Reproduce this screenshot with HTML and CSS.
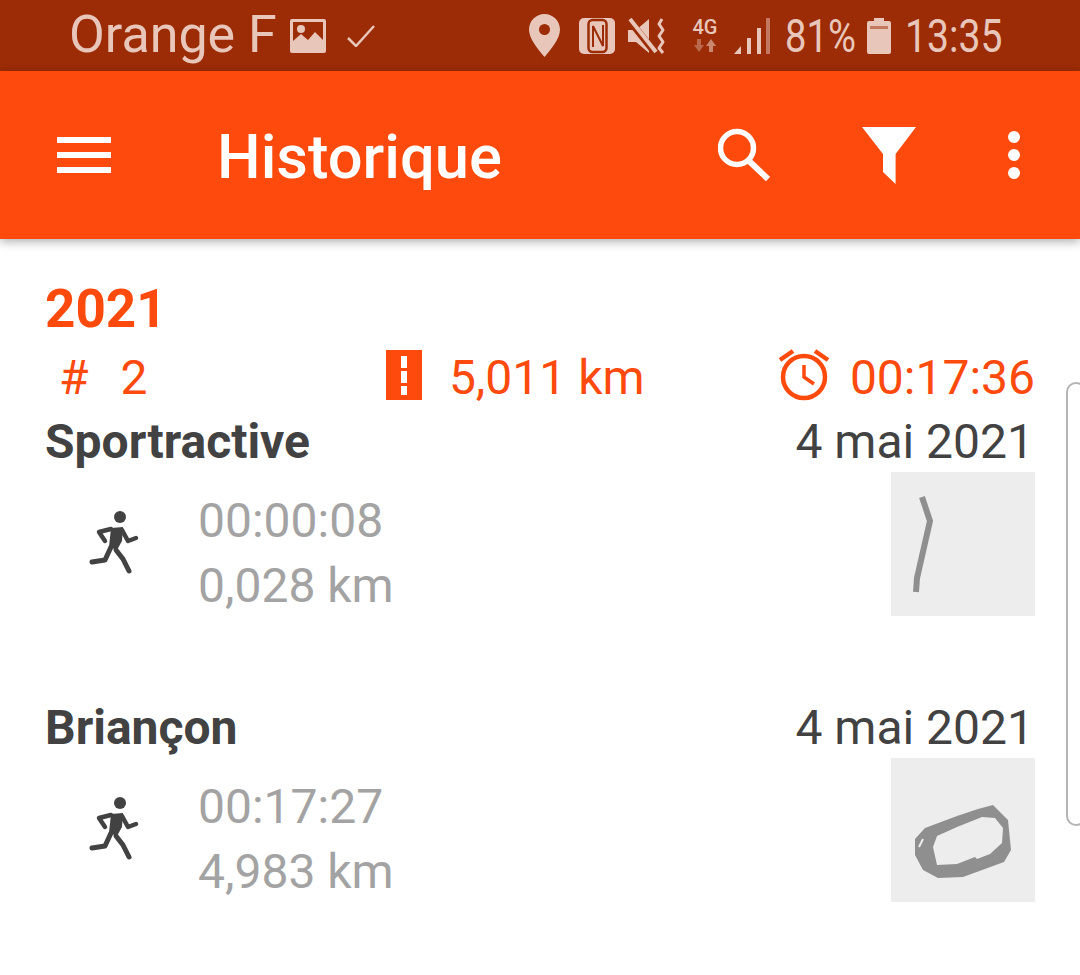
FILE: index.html
```html
<!DOCTYPE html>
<html lang="fr">
<head>
<meta charset="UTF-8" />
<meta name="viewport" content="width=device-width, initial-scale=1" />
<title>Historique</title>
<link rel="stylesheet" href="styles.css">
</head>
<body>

<!-- Status bar -->
<div class="status-bar">
  <span class="carrier">Orange F</span>
  <svg class="ic-image" width="36" height="34" viewBox="0 0 36 34">
    <path fill-rule="evenodd" fill="currentColor" d="M2 0h32a2 2 0 0 1 2 2v30a2 2 0 0 1-2 2H2a2 2 0 0 1-2-2V2a2 2 0 0 1 2-2zM3 3v19l8-7 7 6 7-8 8 8V3z"/>
    <circle cx="11" cy="10" r="4" fill="currentColor"/>
  </svg>
  <svg class="ic-check" width="28" height="22" viewBox="0 0 28 22">
    <path d="M1 13l8 8L27 1" fill="none" stroke="currentColor" stroke-width="2.500"/>
  </svg>
  <div class="status-right">
    <svg class="ic-pin" width="31" height="43" viewBox="0 0 31 43">
      <path fill-rule="evenodd" fill="currentColor" d="M15.500 0C7 0 0 7 0 15.500 0 25 9 35 15.500 43 22 35 31 25 31 15.500 31 7 24 0 15.500 0zm0 10a5.500 5.500 0 1 1 0 11 5.500 5.500 0 0 1 0-11z"/>
    </svg>
    <svg class="ic-nfc" width="36" height="36" viewBox="0 0 36 36">
      <rect width="36" height="36" rx="5" fill="currentColor"/>
      <rect x="9.500" y="2" width="18" height="32" rx="4" fill="none" stroke="#9b2c06" stroke-width="2.500"/>
      <path d="M14 29V8l10 20V7" fill="none" stroke="#9b2c06" stroke-width="2"/>
    </svg>
    <svg class="ic-mute" width="38" height="36" viewBox="0 0 38 36">
      <path fill="currentColor" d="M0 12h8L21 1v34L8 24H0z"/>
      <path d="M1 2l27 34" stroke="#9b2c06" stroke-width="7"/>
      <path d="M2 1l26 33" stroke="currentColor" stroke-width="4"/>
      <path d="M34 1l-3 5 4 6-4 6 4 6-4 6 4 5" fill="none" stroke="currentColor" stroke-width="3" stroke-linejoin="round"/>
    </svg>
    <div class="net">
      <span class="net-label">4G</span>
      <svg width="22" height="13" viewBox="0 0 22 13">
        <path fill="currentColor" opacity="0.4" d="M3 0h4v6h3l-5 7-5-7h3z"/>
        <path fill="currentColor" opacity="0.6" d="M17 0l5 7h-3v6h-4V7h-3z"/>
      </svg>
    </div>
    <svg class="ic-signal" width="36" height="36" viewBox="0 0 36 36">
      <path fill="currentColor" d="M0 36l7-8v8zM13 20h4v16h-4zM23 10h4v26h-4z"/>
      <path fill="currentColor" opacity="0.5" d="M32 0h4v36h-4z"/>
    </svg>
    <span class="percent">81%</span>
    <svg class="ic-battery" width="24" height="36" viewBox="0 0 24 36">
      <path fill="currentColor" d="M7 0h10v3h5a2 2 0 0 1 2 2v29a2 2 0 0 1-2 2H2a2 2 0 0 1-2-2V5a2 2 0 0 1 2-2h5z"/>
      <path fill="#9b2c06" opacity="0.5" d="M3 8h18v3H3z"/>
    </svg>
    <span class="clock">13:35</span>
  </div>
</div>

<!-- App bar -->
<header class="app-bar">
  <div class="menu-btn"><span></span><span></span><span></span></div>
  <h1 class="title">Historique</h1>
  <div class="actions">
    <svg class="ic-search" width="52" height="54" viewBox="0 0 52 54">
      <circle cx="19" cy="20" r="16.500" fill="none" stroke="#fff" stroke-width="5.500"/>
      <path d="M31 33l19 18" stroke="#fff" stroke-width="6"/>
    </svg>
    <svg class="ic-filter" width="54" height="57" viewBox="0 0 54 57">
      <path fill="#fff" d="M0 0h54L33.600 27v30L21 45V27z"/>
    </svg>
    <div class="dots"><span></span><span></span><span></span></div>
  </div>
</header>

<main class="history">
  <div class="year">2021</div>

  <div class="stats">
    <div class="stat">
      <span class="stat-hash">#</span>
      <span>2</span>
    </div>
    <div class="stat stat-dist">
      <svg class="stat-icon" width="36" height="50" viewBox="0 0 36 50">
        <path fill-rule="evenodd" fill="#ff4a0d" d="M0 0h36v50H0zM15 6v12h6V6zM15 21v12h6V21zM15 36v9h6v-9z"/>
      </svg>
      <span>5,011 km</span>
    </div>
    <div class="stat stat-time">
      <svg class="stat-icon" width="52" height="52" viewBox="0 0 52 52">
        <circle cx="25" cy="28" r="21" fill="none" stroke="#ff4a0d" stroke-width="4.500"/>
        <path d="M1 11L14 2M36 2l13 9" stroke="#ff4a0d" stroke-width="4.500"/>
        <path d="M25 16v12l10 7" fill="none" stroke="#ff4a0d" stroke-width="3.500"/>
      </svg>
      <span>00:17:36</span>
    </div>
  </div>

  <!-- Sessions -->
  <section class="session">
    <div class="session-head">
      <span class="session-name">Sportractive</span>
      <span class="session-date">4 mai 2021</span>
    </div>
    <div class="session-body">
      <svg class="runner" width="72" height="80" viewBox="0 0 72 80"><use href="#run"/></svg>
      <div class="session-values">
        <div>00:00:08</div>
        <div>0,028 km</div>
      </div>
      <svg class="thumb" width="144" height="144" viewBox="0 0 144 144">
        <path d="M31 25l8 24-13 57-1 14" fill="none" stroke="#8f8f8f" stroke-width="6"/>
      </svg>
    </div>
  </section>

  <section class="session">
    <div class="session-head">
      <span class="session-name">Briançon</span>
      <span class="session-date">4 mai 2021</span>
    </div>
    <div class="session-body">
      <svg class="runner" width="72" height="80" viewBox="0 0 72 80"><use href="#run"/></svg>
      <div class="session-values">
        <div>00:17:27</div>
        <div>4,983 km</div>
      </div>
      <svg class="thumb" width="144" height="144" viewBox="0 0 144 144">
        <path fill-rule="evenodd" fill="#8f8f8f" d="M102 47l15 15 3 30-7 12-41 15-25 1-15-8-8-15V81l10-11 32-12 21-7zM91 59L66 69 46 78l-4 11 4 18 20-1 18-7 2 2 13-5 12-11 1-15-8-10-13-1z"/>
        <path d="M28 89l4-8" stroke="#ededed" stroke-width="2"/>
      </svg>
    </div>
  </section>
</main>

<!-- Edge panel handle -->
<div class="edge-handle"></div>

<svg class="defs" width="0" height="0">
  <defs>
    <g id="run" fill="none" stroke="#424242" stroke-linecap="round" stroke-linejoin="round">
      <circle cx="50" cy="17" r="6" fill="#424242" stroke="none"/>
      <path fill="#424242" stroke="none" d="M41 28l12-1-1 14-5 9-8-3z"/>
      <path stroke-width="4.500" d="M41 29l-12 3 6 9"/>
      <path stroke-width="4.500" d="M52 30l6 11 8-3"/>
      <path stroke-width="5" d="M41 47l-6 13-13 2"/>
      <path stroke-width="5" d="M46 50l7 9 6 12"/>
    </g>
  </defs>
</svg>

</body>
</html>
```
FILE: styles.css
```css
html, body {
  margin: 0;
  padding: 0;
}
body {
  font-family: Roboto, "Liberation Sans", sans-serif;
  background: white;
  height: 975px;
  width: 1080px;
  position: relative;
  overflow: hidden;
}
.defs {
  position: absolute;
}

/* status bar */
.status-bar {
  height: 71px;
  background: #9b2c06;
  color: #e9c6ba;
  display: flex;
  align-items: center;
  padding-left: 69px;
  padding-right: 79px;
  box-sizing: border-box;
}
.carrier {
  font-size: 52px;
  width: 206px;
  white-space: nowrap;
  margin-top: -2px;
}
.ic-image {
  margin-left: 15px;
}
.ic-check {
  margin-left: 21px;
}
.status-right {
  margin-left: auto;
  display: flex;
  align-items: center;
}
.ic-nfc {
  margin-left: 19px;
}
.ic-mute {
  margin-left: 13px;
}
.net {
  margin-left: 25px;
  width: 28px;
  display: flex;
  flex-direction: column;
  align-items: center;
  gap: 3px;
}
.net-label {
  font-size: 20px;
  font-weight: 500;
  line-height: 17px;
}
.ic-signal {
  margin-left: 15px;
}
.percent {
  margin-left: 15px;
  width: 69px;
  font-size: 46px;
  white-space: nowrap;
  display: inline-block;
  transform: scaleX(0.83);
  transform-origin: left center;
}
.ic-battery {
  margin-left: 13px;
}
.clock {
  margin-left: 14px;
  width: 96px;
  font-size: 46px;
  white-space: nowrap;
  display: inline-block;
  transform: scaleX(0.85);
  transform-origin: left center;
}

/* app bar */
.app-bar {
  height: 168px;
  background: #ff4a0d;
  display: flex;
  align-items: center;
  padding-left: 57px;
  padding-right: 60px;
  box-shadow: 0 3px 9px rgba(0,0,0,0.3);
  position: relative;
}
.menu-btn {
  width: 54px;
  display: flex;
  flex-direction: column;
  gap: 9px;
}
.menu-btn span {
  height: 6px;
  background: white;
}
.title {
  margin: 3px 0 0 106px;
  font-size: 61.500px;
  font-weight: 500;
  color: white;
}
.actions {
  margin-left: auto;
  display: flex;
  align-items: center;
  gap: 92px;
}
.dots {
  display: flex;
  flex-direction: column;
  gap: 6px;
}
.dots span {
  width: 12px;
  height: 12px;
  border-radius: 50%;
  background: white;
}

/* content */
.history {
  padding: 40px 45px 0 45px;
}
.year {
  color: #ff4a0d;
  font-size: 53px;
  font-weight: 700;
  line-height: 60px;
}
.stats {
  color: #ff4a0d;
  font-size: 48px;
  display: flex;
  justify-content: space-between;
  align-items: center;
  height: 65px;
  margin-top: 6px;
  padding-left: 14px;
}
.stat {
  display: flex;
  align-items: center;
}
.stat-icon {
  margin-top: -5px;
}
.stat-hash {
  margin-right: 32px;
}
.stat-dist {
  gap: 27px;
  margin-left: 104px;
}
.stat-time {
  gap: 19px;
}

.session {
  height: 286px;
}
.session-head {
  height: 62px;
  display: flex;
  justify-content: space-between;
  align-items: center;
  color: #424242;
  padding-right: 1px;
}
.session-name {
  font-size: 48px;
  font-weight: 700;
}
.session-date {
  font-size: 48px;
}
.session-body {
  display: flex;
  align-items: flex-start;
}
.runner {
  margin-left: 25px;
  margin-top: 28px;
}
.session-values {
  margin-left: 56px;
  margin-top: 16px;
  color: #a3a3a3;
  font-size: 48px;
  line-height: 65px;
}
.thumb {
  margin-left: auto;
  background: #ededed;
}

.edge-handle {
  position: absolute;
  left: 1066px;
  top: 382px;
  width: 20px;
  height: 444px;
  box-sizing: border-box;
  border: 2px solid #b4b4b4;
  border-radius: 18px;
  background: white;
}
```
